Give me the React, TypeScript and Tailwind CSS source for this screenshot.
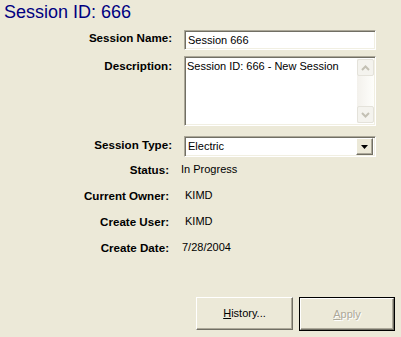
import React from 'react';

const font = { fontFamily: '"Liberation Sans", Arial, sans-serif' };

// sunken XP-classic field edge
const sunken =
  'border-t border-l border-[#ACA899] border-b border-r border-b-white border-r-white shadow-[inset_1px_1px_0_#716F64,inset_-1px_-1px_0_#F1EFE2]';

function Label({ children, pt = 'pt-[2px]', w = 'w-[172px]' }: { children: React.ReactNode; pt?: string; w?: string }) {
  return (
    <div className={`${w} shrink-0 text-right font-bold text-[11.6px] leading-[13px] text-black ${pt}`}>
      {children}
    </div>
  );
}

function InfoRow({ label, value, pl = 'pl-0' }: { label: string; value: string; pl?: string }) {
  return (
    <div className="flex h-[26px] items-center">
      <Label pt="pt-0" w="w-[169px]">{label}</Label>
      <div className={`ml-[12px] text-[11px] leading-[13px] text-black ${pl}`}>{value}</div>
    </div>
  );
}

function ScrollArrow({ up }: { up?: boolean }) {
  return (
    <div className="flex h-[17px] w-[17px] items-center justify-center rounded-[2px] border border-[#E4E2DA] bg-[#F4F3EE]">
      <svg width="9" height="6" viewBox="0 0 9 6">
        <path
          d={up ? 'M1 5 L4.5 1.5 L8 5' : 'M1 1 L4.5 4.5 L8 1'}
          fill="none"
          stroke="#C3C0B4"
          strokeWidth="2"
        />
      </svg>
    </div>
  );
}

export default function App() {
  return (
    <div className="flex h-[337px] w-[401px] flex-col bg-[#ECE9D8]" style={font}>
      {/* Title */}
      <div className="h-[26px] pl-[4px] pt-[1px] text-[18px] leading-[22px] text-[#000080]">Session ID: 666</div>

      {/* Session Name */}
      <div className="mt-[4px] flex items-start">
        <Label pt="pt-[1px]">Session Name:</Label>
        <div className={`ml-[12px] flex h-[20px] w-[192px] items-center bg-white pl-[3px] text-[11px] ${sunken}`}>
          Session 666
        </div>
      </div>

      {/* Description */}
      <div className="mt-[6px] flex items-start">
        <Label pt="pt-[3px]">Description:</Label>
        <div className={`ml-[12px] flex h-[70px] w-[192px] bg-white ${sunken}`}>
          <div className="flex-1 pl-[2px] pt-[3px] text-[11px] leading-[13px]">Session ID: 666 - New Session</div>
          <div className="my-[2px] mr-[1px] flex w-[17px] flex-col justify-between bg-gradient-to-r from-[#F3F1EC] to-[#FEFEFB]">
            <ScrollArrow up />
            <ScrollArrow />
          </div>
        </div>
      </div>

      {/* Session Type */}
      <div className="mt-[10px] flex items-start">
        <Label pt="pt-[2px]">Session Type:</Label>
        <div className={`ml-[12px] flex h-[21px] w-[192px] items-center bg-white pl-[3px] pr-[2px] text-[11px] ${sunken}`}>
          <span className="flex-1">Electric</span>
          <div className="flex h-[17px] w-[17px] items-center justify-center border border-t-white border-l-white border-b-[#716F64] border-r-[#716F64] bg-[#ECE9D8] shadow-[inset_-1px_-1px_0_#ACA899]">
            <svg width="7" height="4" viewBox="0 0 7 4">
              <path d="M0 0 H7 L3.5 4 Z" fill="#000" />
            </svg>
          </div>
        </div>
      </div>

      {/* Read-only info */}
      <div className="mt-[-1px] flex flex-col">
        <InfoRow label="Status:" value="In Progress" />
        <InfoRow label="Current Owner:" value="KIMD" pl="pl-[4px]" />
        <InfoRow label="Create User:" value="KIMD" pl="pl-[4px]" />
        <InfoRow label="Create Date:" value="7/28/2004" pl="pl-[1px]" />
      </div>

      {/* Buttons */}
      <div className="mt-auto mb-[6px] flex justify-end gap-[6px] pr-[6px]">
        <button className="flex h-[33px] w-[97px] items-center justify-center border border-t-white border-l-white border-b-[#716F64] border-r-[#716F64] bg-[#ECE9D8] text-[11px] text-black shadow-[inset_-1px_-1px_0_#ACA899]">
          <span>
            <span className="underline">H</span>istory...
          </span>
        </button>
        <button className="flex h-[34px] w-[96px] items-center justify-center border border-black bg-[#ECE9D8] text-[11px]">
          <span className="flex h-full w-full items-center justify-center border border-t-white border-l-white border-b-[#716F64] border-r-[#716F64] shadow-[inset_-1px_-1px_0_#ACA899]">
            <span className="text-[#ACA899] [text-shadow:1px_1px_0_#fff]">
              <span className="underline">A</span>pply
            </span>
          </span>
        </button>
      </div>
    </div>
  );
}
